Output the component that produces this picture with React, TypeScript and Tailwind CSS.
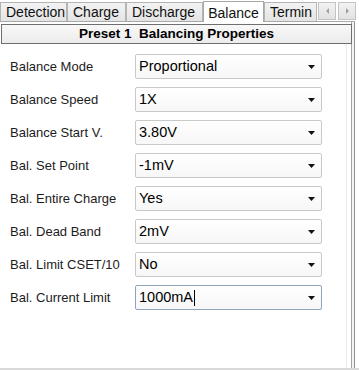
import React from "react";

const tabs = [
  { name: "Detection", w: "w-[67px]" },
  { name: "Charge", w: "w-[59px]" },
  { name: "Discharge", w: "w-[77px]" },
  { name: "Balance", w: "w-[61px]", active: true },
  { name: "Termin", w: "w-[53px]" },
];

const rows = [
  { label: "Balance Mode", value: "Proportional" },
  { label: "Balance Speed", value: "1X" },
  { label: "Balance Start V.", value: "3.80V" },
  { label: "Bal. Set Point", value: "-1mV" },
  { label: "Bal. Entire Charge", value: "Yes" },
  { label: "Bal. Dead Band", value: "2mV" },
  { label: "Bal. Limit CSET/10", value: "No" },
  { label: "Bal. Current Limit", value: "1000mA", focused: true },
];

function Caret() {
  return (
    <svg width="7" height="4" viewBox="0 0 7 4" className="block">
      <path d="M0 0h7L3.5 4z" fill="#111" />
    </svg>
  );
}

function ScrollArrow({ dir }: { dir: "left" | "right" }) {
  return (
    <div className="w-[18px] h-[18px] bg-gradient-to-b from-[#f2f2f2] to-[#e2e2e2] border border-[#c4c4c4] flex items-center justify-center">
      <svg width="3" height="6" viewBox="0 0 3 6">
        <path d={dir === "left" ? "M3 0v6L0 3z" : "M0 0v6l3-3z"} fill="#a0a0a0" />
      </svg>
    </div>
  );
}

function Combo({ value, focused }: { value: string; focused?: boolean }) {
  return (
    <div
      className={`w-[187px] h-[25px] flex items-center justify-between pl-[3px] pr-[6px] rounded-[2px] bg-gradient-to-b from-white to-[#f7f7f7] border ${
        focused ? "border-[#8ea4bf]" : "border-[#c9c9c9]"
      }`}
    >
      <span className="text-[14.5px] text-black leading-none flex items-center">
        {value}
        {focused && <span className="inline-block w-px h-[16px] bg-black ml-px" />}
      </span>
      <Caret />
    </div>
  );
}

export default function App() {
  return (
    <div
      className="w-[359px] h-[370px] bg-white overflow-hidden flex flex-col"
      style={{ fontFamily: '"Liberation Sans", Arial, sans-serif' }}
    >
      {/* Tab strip */}
      <div className="flex h-[22px] shrink-0 relative">
        <div className="w-[317px] flex items-end overflow-hidden">
          {tabs.map((t) =>
            t.active ? (
              <div
                key={t.name}
                className={`${t.w} shrink-0 h-[22px] bg-white border border-b-0 border-[#a8a8a8] flex justify-center pt-[1px] text-[14px] text-[#111] relative z-10 -mb-px`}
              >
                {t.name}
              </div>
            ) : (
              <div
                key={t.name}
                className={`${t.w} shrink-0 h-[20px] bg-gradient-to-b from-[#f3f3f3] to-[#e3e3e3] border border-b-0 border-[#b4b4b4] flex items-center pl-[5px] text-[14px] text-[#111] whitespace-nowrap overflow-hidden`}
              >
                {t.name}
              </div>
            )
          )}
        </div>
        <div className="flex gap-[2px] pt-[2px] pl-px">
          <ScrollArrow dir="left" />
          <ScrollArrow dir="right" />
        </div>
        <div className="absolute left-0 right-[4px] bottom-0 h-px bg-[#a8a8a8]" />
      </div>

      {/* Panel */}
      <div className="flex flex-1 border-b-2 border-[#d9d9d9]">
        <div className="w-[347px] border-r border-[#ececec] pt-[2px] flex flex-col">
          <div className="ml-px w-[351px] h-[20px] border border-[#6f6f6f] bg-gradient-to-b from-[#f8f8f8] to-[#ececec] flex items-center justify-center text-[13.5px] font-bold text-black whitespace-pre relative z-10">
            Preset 1  Balancing Properties
          </div>
          <div className="flex flex-col gap-[8px] pt-[10px]">
            {rows.map((r) => (
              <div key={r.label} className="flex items-center">
                <span className="w-[135px] pl-[10px] text-[13px] text-[#1c1c1c]">{r.label}</span>
                <Combo value={r.value} focused={r.focused} />
              </div>
            ))}
          </div>
        </div>
        <div className="w-[4px]" />
        <div className="w-px bg-[#a3a3a3]" />
        <div className="w-[2px] bg-[#f4f4f4]" />
        <div className="w-px bg-[#8f8f8f]" />
      </div>
    </div>
  );
}
